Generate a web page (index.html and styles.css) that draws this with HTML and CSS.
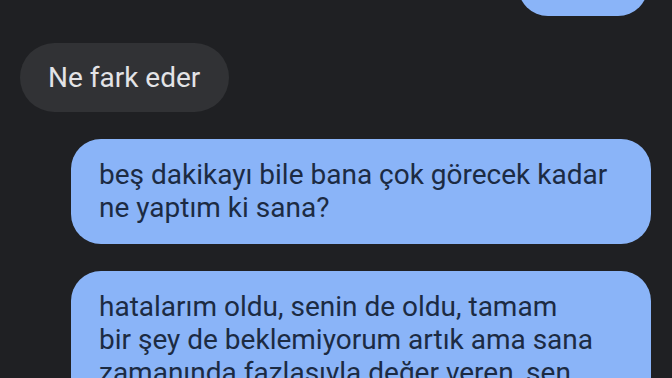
FILE: index.html
```html
<!DOCTYPE html>
<html lang="tr">
<head>
  <meta charset="UTF-8">
  <meta name="viewport" content="width=device-width, initial-scale=1.0">
  <title>Mesajlar</title>
  <link rel="stylesheet" href="styles.css">
</head>
<body>
  <div class="thread">
    <div class="bubble sent partial"></div>

    <div class="bubble received">Ne fark eder</div>

    <div class="bubble sent">beş dakikayı bile bana çok görecek kadar<br>ne yaptım ki sana?</div>

    <div class="bubble sent">hatalarım oldu, senin de oldu, tamam<br>bir şey de beklemiyorum artık ama sana<br>zamanında fazlasıyla değer veren, sen</div>
  </div>
</body>
</html>
```

FILE: styles.css
```css
body {
  margin: 0;
  height: 100vh;
  overflow: hidden;
  background-color: #1f2023;
  font-family: Roboto, "Noto Sans", sans-serif;
}

.thread {
  display: flex;
  flex-direction: column;
  gap: 27px;
  padding: 0 21px 0 20px;
}

.bubble {
  font-size: 28px;
  line-height: 33px;
  border-radius: 30px;
  padding: 19px 28px 20px;
}

.received {
  align-self: flex-start;
  background: #313235;
  color: #e3e3e6;
  border-radius: 35px;
  padding: 18px 29px 18px 28px;
}

.sent {
  align-self: flex-end;
  box-sizing: border-box;
  width: 580px;
  background: #8ab4f8;
  color: #1c2b43;
}

.partial {
  width: 130px;
  height: 60px;
  margin-top: -44px;
  margin-right: 3px;
  padding: 0;
}
```
